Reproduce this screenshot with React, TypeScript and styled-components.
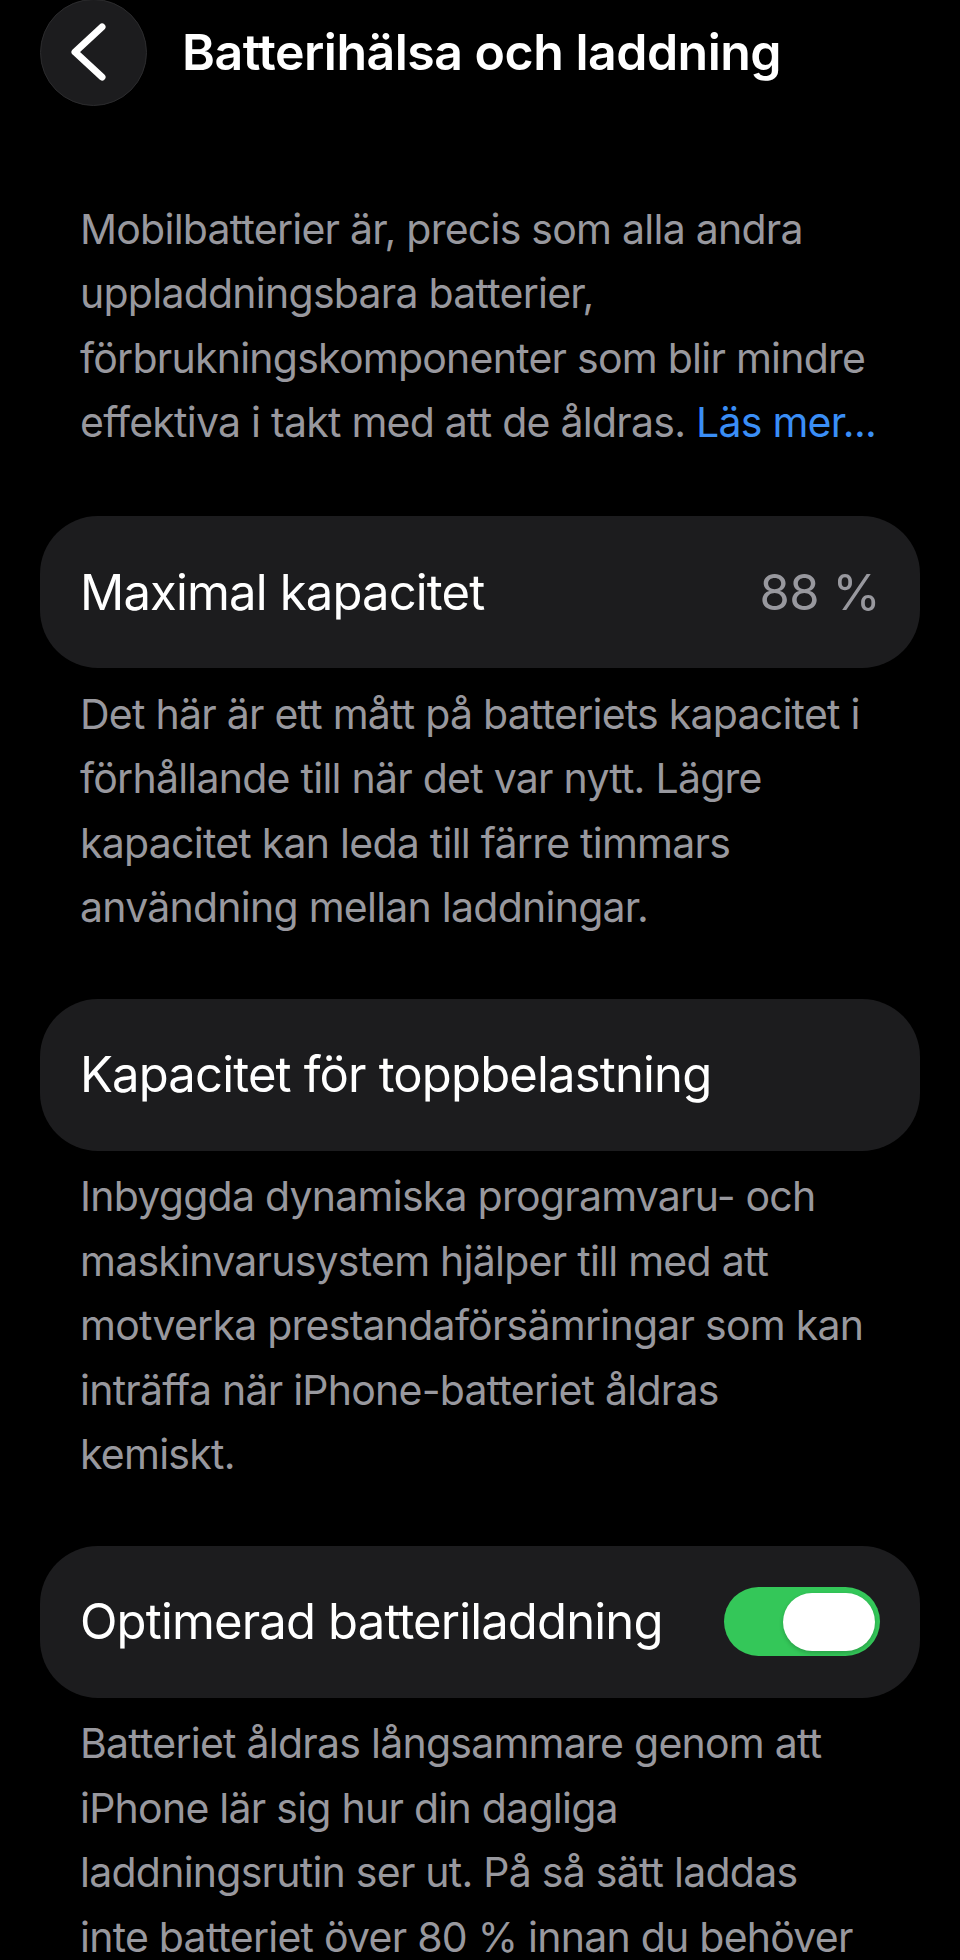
import React, { useState } from "react";
import styled, { createGlobalStyle } from "styled-components";

const GlobalStyle = createGlobalStyle`
  html, body {
    margin: 0;
    padding: 0;
    background: #000;
  }
  body {
    font-family: Inter, "Noto Sans", "Liberation Sans", sans-serif;
    -webkit-font-smoothing: antialiased;
  }
`;

type Section = {
  id: string;
  label: string;
  value?: string;
  toggle?: boolean;
  footer: string;
};

const sections: Section[] = [
  {
    id: "capacity",
    label: "Maximal kapacitet",
    value: "88 %",
    footer:
      "Det här är ett mått på batteriets kapacitet i förhållande till när det var nytt. Lägre kapacitet kan leda till färre timmars användning mellan laddningar.",
  },
  {
    id: "peak",
    label: "Kapacitet för toppbelastning",
    footer:
      "Inbyggda dynamiska programvaru- och maskinvarusystem hjälper till med att motverka prestandaförsämringar som kan inträffa när iPhone-batteriet åldras kemiskt.",
  },
  {
    id: "optimized",
    label: "Optimerad batteriladdning",
    toggle: true,
    footer:
      "Batteriet åldras långsammare genom att iPhone lär sig hur din dagliga laddningsrutin ser ut. På så sätt laddas inte batteriet över 80 % innan du behöver använda det.",
  },
];

const App = () => {
  const [optimized, setOptimized] = useState(true);

  return (
    <Page>
      <GlobalStyle />
      <Header>
        <BackButton aria-label="Tillbaka">
          <svg width="40" height="60" viewBox="0 0 40 60" fill="none">
            <path
              d="M32 5 L5 30 L32 55"
              stroke="#fff"
              strokeWidth="7"
              strokeLinecap="round"
              strokeLinejoin="round"
            />
          </svg>
        </BackButton>
        <Title>Batterihälsa och laddning</Title>
      </Header>

      <Intro>
        Mobilbatterier är, precis som alla andra uppladdningsbara batterier,
        förbrukningskomponenter som blir mindre effektiva i takt med att de
        åldras. <Link href="#">Läs mer...</Link>
      </Intro>

      {sections.map((s) => (
        <Group key={s.id}>
          <Card>
            <Label>{s.label}</Label>
            {s.value && <Value>{s.value}</Value>}
            {s.toggle && (
              <Switch
                $on={optimized}
                onClick={() => setOptimized(!optimized)}
                aria-pressed={optimized}
              >
                <Knob $on={optimized} />
              </Switch>
            )}
          </Card>
          <Footer>{s.footer}</Footer>
        </Group>
      ))}
    </Page>
  );
};

const Page = styled.div`
  width: 960px;
  height: 1960px;
  background: #000;
  display: flex;
  flex-direction: column;
  padding: 0 40px;
  box-sizing: border-box;
  overflow: hidden;
`;

const Header = styled.div`
  display: flex;
  align-items: center;
  gap: 35px;
  height: 106px;
  margin-top: -1px;
  flex-shrink: 0;
`;

const BackButton = styled.button`
  width: 107px;
  height: 107px;
  border-radius: 50%;
  background: #1c1c1e;
  border: 1.5px solid #2c2c2e;
  display: flex;
  align-items: center;
  justify-content: center;
  padding: 0 8px 0 0;
  flex-shrink: 0;
  cursor: pointer;
`;

const Title = styled.h1`
  margin: 0;
  color: #fff;
  font-size: 50px;
  font-weight: 600;
  letter-spacing: -0.5px;
`;

const Intro = styled.p`
  margin: 91.5px 0 2.5px;
  padding: 0 40px;
  color: #98989e;
  font-size: 41px;
  line-height: 64.5px;
  letter-spacing: -0.75px;
  flex-shrink: 0;
`;

const Link = styled.a`
  color: #3a8ef6;
  text-decoration: none;
`;

const Group = styled.section`
  display: flex;
  flex-direction: column;
  margin-top: 59px;
  flex-shrink: 0;
`;

const Card = styled.div`
  height: 152px;
  border-radius: 58px;
  background: #1c1c1e;
  display: flex;
  align-items: center;
  justify-content: space-between;
  padding: 0 40px;
  box-sizing: border-box;
`;

const Label = styled.span`
  color: #fff;
  font-size: 49px;
  letter-spacing: -0.85px;
`;

const Value = styled.span`
  color: #98989e;
  font-size: 49px;
  letter-spacing: -0.5px;
`;

const Switch = styled.button<{ $on: boolean }>`
  width: 156px;
  height: 69px;
  border-radius: 35px;
  border: none;
  padding: 0 5px;
  background: ${(p) => (p.$on ? "#34c759" : "#39393d")};
  display: flex;
  align-items: center;
  justify-content: ${(p) => (p.$on ? "flex-end" : "flex-start")};
  cursor: pointer;
`;

const Knob = styled.span<{ $on: boolean }>`
  width: 92px;
  height: 58px;
  border-radius: 29px;
  background: #fff;
  box-shadow: 0 2px 4px rgba(0, 0, 0, 0.2);
`;

const Footer = styled.p`
  margin: 13.5px 0 0;
  padding: 0 50px 0 40px;
  color: #98989e;
  font-size: 41px;
  line-height: 64.5px;
  letter-spacing: -0.75px;
`;

export default App;
